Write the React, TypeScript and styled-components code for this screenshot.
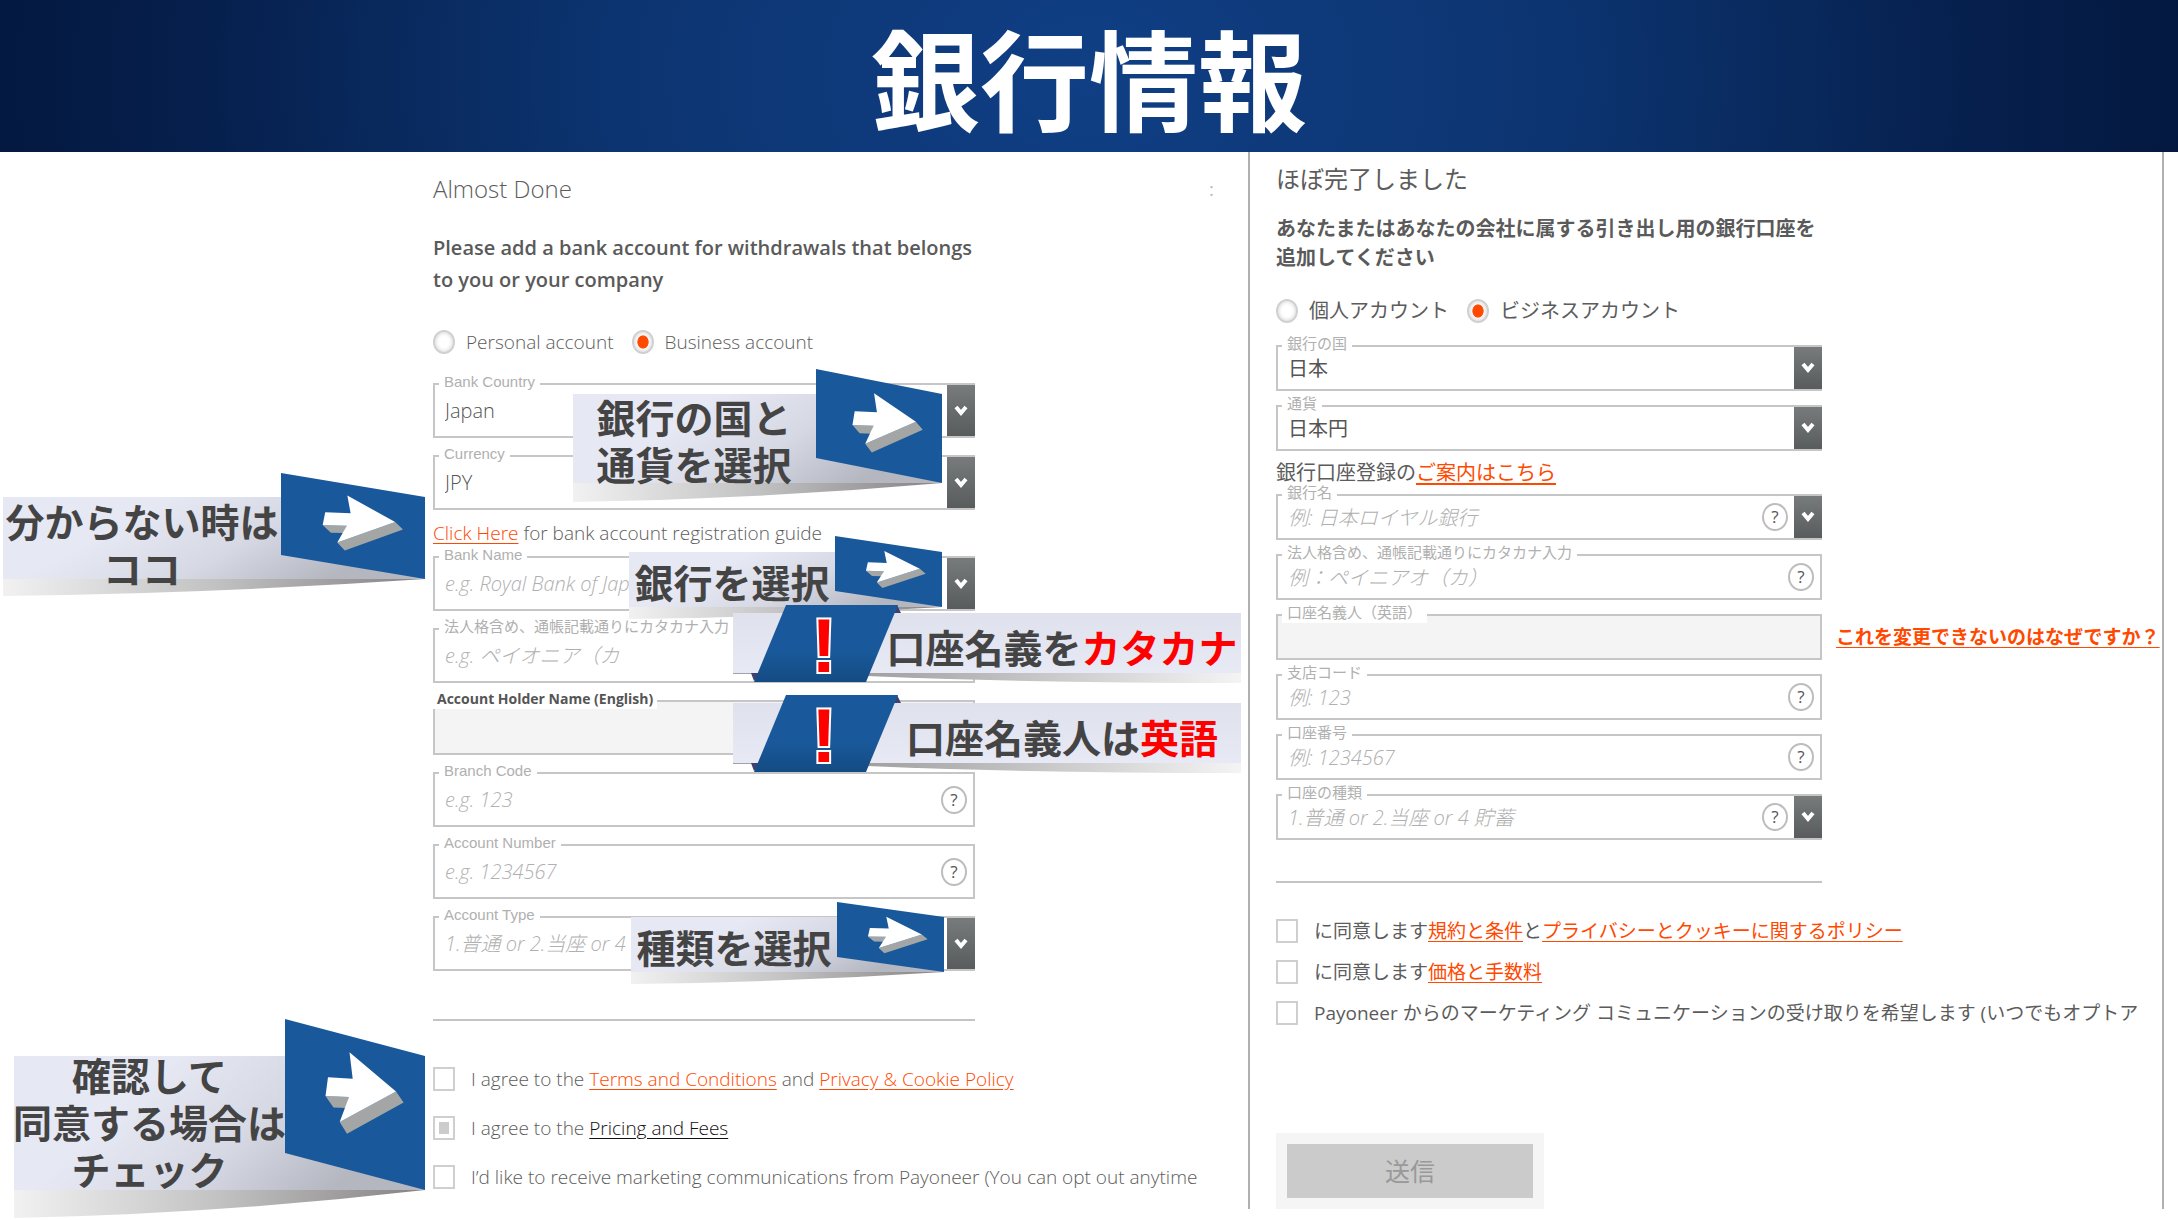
import React, { useId } from "react";
import styled, { createGlobalStyle, css } from "styled-components";

const sans = '"Open Sans", "Noto Sans CJK JP", sans-serif';
const orange = "#ff4800";

const GlobalStyle = createGlobalStyle`
  *, *::before, *::after { box-sizing: border-box; }
  body { margin: 0; background: #fff; font-family: ${sans}; color: #5c5c5c; }
  h1, h2, p { margin: 0; }
`;

const Banner = styled.header`
  display: flex;
  justify-content: center;
  align-items: center;
  height: 152px;
  background: radial-gradient(ellipse 1200px 900px at 50% 50%, #103f85 0%, #0c3470 40%, #061f4c 75%, #02153a 100%);
`;

const BannerTitle = styled.h1`
  font: 700 109px/144px "Noto Sans CJK JP", sans-serif;
  color: #fff;
`;

const Columns = styled.main`
  display: grid;
  grid-template-columns: minmax(0, 1248fr) minmax(0, 930fr);
  padding-bottom: 12px;
`;

const EnglishPanel = styled.section`
  padding: 17px 34px 0 433px;
`;

const JapanesePanel = styled.section`
  margin-right: 14px;
  padding: 11px 0 0 26px;
  border: solid #b0b0b0;
  border-width: 0 2px;
  overflow: hidden;
`;

const TitleRow = styled.div`
  display: flex;
  justify-content: space-between;
  align-items: center;
`;

const Title = styled.h2<{ $compact?: boolean }>`
  font-size: 24px;
  line-height: ${(p) => (p.$compact ? 32 : 40)}px;
  font-weight: ${(p) => (p.$compact ? 400 : 300)};
`;

const Mark = styled.span`
  font-size: 19px;
  color: #bbb;
`;

const Lead = styled.p<{ $compact?: boolean }>`
  max-width: 546px;
  margin-top: ${(p) => (p.$compact ? 19 : 23)}px;
  font-size: 20px;
  line-height: ${(p) => (p.$compact ? 29 : 32)}px;
  font-weight: ${(p) => (p.$compact ? 700 : 600)};
  color: #5a5a5a;
  white-space: nowrap;
`;

const RadioRow = styled.div<{ $compact?: boolean }>`
  display: flex;
  gap: 18px;
  height: 26px;
  margin: ${(p) => (p.$compact ? "26px 0 21px" : "33px 0 28px")};
`;

const Choice = styled.label<{ $compact?: boolean }>`
  display: flex;
  align-items: center;
  gap: 11px;
  font-size: ${(p) => (p.$compact ? 20 : 19)}px;
  font-weight: ${(p) => (p.$compact ? 400 : 300)};
  line-height: 26px;
  white-space: nowrap;
`;

const Radio = styled.input`
  appearance: none;
  flex: none;
  width: 22px;
  height: 24px;
  margin: 0;
  border: 2px solid #d0d0d0;
  border-radius: 50%;
  box-shadow: inset 0 0 4px #ccc;
  &:checked {
    background: radial-gradient(ellipse 6px 7px, ${orange} 88%, transparent 100%);
  }
`;

const Fields = styled.div<{ $compact?: boolean }>`
  display: flex;
  flex-direction: column;
  gap: ${(p) => (p.$compact ? 14 : 17)}px;
  max-width: ${(p) => (p.$compact ? 546 : 542)}px;
`;

const FieldBox = styled.div<{ $compact?: boolean; $muted?: boolean }>`
  position: relative;
  display: flex;
  align-items: stretch;
  height: ${(p) => (p.$compact ? 46 : 55)}px;
  border: 2px solid #c6c6c6;
  background: ${(p) => (p.$muted ? "#f4f4f4" : "#fff")};
`;

const FieldLabel = styled.label<{ $strong?: boolean }>`
  position: absolute;
  top: -13px;
  left: ${(p) => (p.$strong ? -2 : 4)}px;
  padding: 0 ${(p) => (p.$strong ? 4 : 5)}px;
  background: #fff;
  font: 400 15px/20px "Liberation Sans", "Noto Sans CJK JP", sans-serif;
  color: #b0b0b0;
  white-space: nowrap;
  ${(p) => p.$strong && css`
    font: 700 14px/20px "Open Sans", sans-serif;
    color: #555;
  `}
`;

const control = css`
  flex: 1;
  min-width: 0;
  padding: 0 10px;
  border: 0;
  outline: 0;
  background: transparent;
  font-family: ${sans};
  font-size: 20px;
  color: #555;
`;

const TextInput = styled.input`
  ${control}
  font-weight: 300;
  &::placeholder { color: #b0b0b0; font-style: italic; opacity: 1; }
`;

const Select = styled.select<{ $compact?: boolean; $hint?: boolean }>`
  ${control}
  appearance: none;
  font-weight: ${(p) => (p.$compact && !p.$hint ? 400 : 300)};
  ${(p) => p.$hint && css`color: #b0b0b0; font-style: italic;`}
`;

const Help = styled.button`
  align-self: center;
  flex: none;
  width: 26px;
  height: 28px;
  margin-right: 6px;
  padding: 0;
  border: 2px solid #bdbdbd;
  border-radius: 50%;
  background: #fff;
  font: 400 17px/20px "Open Sans", sans-serif;
  color: #555;
`;

const ArrowTab = styled.span`
  flex: none;
  display: flex;
  align-items: center;
  justify-content: center;
  width: 28px;
  margin-right: -2px;
  background: linear-gradient(#787b7c, #595c5d);
  pointer-events: none;
`;

const SideLink = styled.a`
  position: absolute;
  left: 558px;
  top: 6px;
  font-size: 19px;
  line-height: 30px;
  font-weight: 700;
  color: ${orange};
  text-underline-offset: 3px;
  white-space: nowrap;
`;

const Guide = styled.p<{ $compact?: boolean }>`
  margin: ${(p) => (p.$compact ? "10px 0 9px" : "11px 0")};
  font-size: ${(p) => (p.$compact ? 20 : 19)}px;
  line-height: 24px;
  font-weight: ${(p) => (p.$compact ? 400 : 300)};
  white-space: nowrap;
`;

const Link = styled.a<{ $dark?: boolean }>`
  color: ${(p) => (p.$dark ? "#111" : orange)};
  text-underline-offset: 3px;
`;

const Rule = styled.hr<{ $compact?: boolean }>`
  max-width: ${(p) => (p.$compact ? 546 : 542)}px;
  height: 2px;
  margin: ${(p) => (p.$compact ? "41px 0 35px" : "48px 0 45px")};
  border: 0;
  background: #c4c4c4;
`;

const Anchor = styled.div`
  position: relative;
`;

const Agreements = styled.div<{ $compact?: boolean }>`
  position: relative;
  display: flex;
  flex-direction: column;
  gap: ${(p) => (p.$compact ? 15 : 23)}px;
`;

const Agreement = styled.div<{ $compact?: boolean }>`
  display: flex;
  align-items: center;
  gap: 16px;
  font-size: 19px;
  line-height: 26px;
  font-weight: ${(p) => (p.$compact ? 400 : 300)};
  white-space: nowrap;
`;

const Checkbox = styled.input`
  appearance: none;
  flex: none;
  width: 22px;
  height: 24px;
  margin: 0;
  border: 2px solid #cfcfcf;
  &:checked {
    padding: 4px;
    background: #ccc content-box;
  }
`;

const SubmitWell = styled.div`
  width: 268px;
  margin-top: 107px;
  padding: 11px;
  background: #f5f5f5;
`;

const Submit = styled.button`
  width: 100%;
  height: 54px;
  border: 0;
  background: #cbcbcb;
  font: 400 25px/32px ${sans};
  color: #999;
`;

const CalloutBox = styled.aside<{ $x: number; $y: number; $w: number; $h: number }>`
  position: absolute;
  z-index: 2;
  left: ${(p) => p.$x}px;
  top: ${(p) => p.$y}px;
  width: ${(p) => p.$w}px;
  height: ${(p) => p.$h}px;
`;

const CalloutArt = styled.svg`
  position: absolute;
  inset: 0;
  overflow: visible;
`;

const CalloutText = styled.p<{ $top: number; $left?: number; $width: number }>`
  position: absolute;
  top: ${(p) => p.$top}px;
  left: ${(p) => p.$left ?? 0}px;
  display: flex;
  justify-content: center;
  width: ${(p) => p.$width}px;
  font: 700 39px/47px "Noto Sans CJK JP", sans-serif;
  color: #444;
  text-align: center;
  white-space: pre;
`;

const Red = styled.span`
  color: #f00;
`;

type ArrowCalloutProps = {
  x: number;
  y: number;
  width: number;
  flagWidth: number;
  slant: number;
  panel: number;
  shadow: number;
  textTop: number;
  textWidth?: number;
  arrowScale?: number;
  children: React.ReactNode;
};

function ArrowCallout({
  x, y, width, flagWidth, slant, panel, shadow, textTop, textWidth, arrowScale = 1.09, children,
}: ArrowCalloutProps) {
  const id = useId();
  const left = width - flagWidth;
  const bottom = slant + panel;
  const height = bottom + shadow;
  const sx = flagWidth / 140;
  const sy = (bottom / 172) * arrowScale;
  return (
    <CalloutBox $x={x} $y={y} $w={width} $h={height}>
      <CalloutArt width={width} height={height} aria-hidden="true">
        <defs>
          <linearGradient id={`${id}p`} x1="0" y1="0" x2="1" y2="0.35">
            <stop offset="0.35" stopColor="#e6e8f4" />
            <stop offset="0.68" stopColor="#d6d8e4" />
            <stop offset="1" stopColor="#b4b6c0" />
          </linearGradient>
          <linearGradient id={`${id}s`}>
            <stop offset="0" stopColor="#f1f1f1" />
            <stop offset="0.5" stopColor="#c2c2c2" />
            <stop offset="1" stopColor="#868284" />
          </linearGradient>
        </defs>
        <rect y={slant} width={width} height={panel} fill={`url(#${id}p)`} />
        <path
          d={`M0 ${bottom}H${width}Q${width * 0.5} ${bottom + shadow * 0.85} 0 ${height}Z`}
          fill={`url(#${id}s)`}
        />
        <path d={`M${left} 0L${width} ${slant}V${bottom}L${left} ${panel}Z`} fill="#19599b" />
        <g transform={`translate(${left} 0) scale(${sx} ${sy})`}>
          <path d="M54.7 103.5L62 115.5L118.6 84L111 73ZM40.5 77.5L48.5 89L61 89.5L64 78.5Z" fill="#a3a6a5" />
          <path d="M64.5 33.5L111 73L54.7 103.5L64 78.5L40.5 77.5L43 58.5L67.7 60Z" fill="#fff" />
        </g>
      </CalloutArt>
      <CalloutText $top={textTop} $width={textWidth ?? left}>{children}</CalloutText>
    </CalloutBox>
  );
}

function AlertCallout({ y, children }: { y: number; children: React.ReactNode }) {
  const id = useId();
  return (
    <CalloutBox $x={298} $y={y} $w={508} $h={78}>
      <CalloutArt width={508} height={78} aria-hidden="true">
        <defs>
          <linearGradient id={`${id}p`} x1="0" y1="0" x2="0" y2="1">
            <stop offset="0" stopColor="#dfe1ed" />
            <stop offset="1" stopColor="#e7e9f5" />
          </linearGradient>
          <linearGradient id={`${id}s`}>
            <stop offset="0" stopColor="#a0a0a0" />
            <stop offset="1" stopColor="#f4f4f4" />
          </linearGradient>
          <linearGradient id={`${id}b`} x1="0" y1="0" x2="0" y2="1">
            <stop offset="0" stopColor="#19599b" />
            <stop offset="0.6" stopColor="#19599b" />
            <stop offset="1" stopColor="#144b83" />
          </linearGradient>
        </defs>
        <rect y="8" width="508" height="60" fill={`url(#${id}p)`} />
        <path d="M134 68H508V78Q300 78 134 71Z" fill={`url(#${id}s)`} />
        <path d="M0 68H24V69H0Z" fill="#9fa1ae" />
        <path d="M18 68L21 76L28 68ZM164 0L168 8H158Z" fill="#3f4170" />
        <path d="M53 0H165L133 77H21Z" fill={`url(#${id}b)`} />
        <text
          x="91"
          y="67"
          textAnchor="middle"
          fontFamily='"Liberation Sans", sans-serif'
          fontWeight="700"
          fontSize="76"
          fill="#f00"
          stroke="#fff"
          strokeWidth="4"
          paintOrder="stroke"
        >
          !
        </text>
      </CalloutArt>
      <CalloutText $top={18} $left={149} $width={360}>{children}</CalloutText>
    </CalloutBox>
  );
}

type FieldProps = {
  label: string;
  value?: string;
  hint?: string;
  select?: boolean;
  help?: boolean;
  muted?: boolean;
  strong?: boolean;
  compact?: boolean;
  children?: React.ReactNode;
};

function Field({ label, value, hint, select, help, muted, strong, compact, children }: FieldProps) {
  const id = useId();
  return (
    <FieldBox $compact={compact} $muted={muted}>
      <FieldLabel htmlFor={id} $strong={strong}>{label}</FieldLabel>
      {select ? (
        <Select id={id} $compact={compact} $hint={!value}>
          <option>{value ?? hint}</option>
        </Select>
      ) : (
        <TextInput id={id} placeholder={hint} readOnly={muted} />
      )}
      {help && <Help type="button">?</Help>}
      {select && (
        <ArrowTab>
          <svg width="14" height="14" viewBox="0 0 14 14" fill="none" stroke="#fff" strokeWidth="4">
            <path d="M2 3L7 9L12 3" />
          </svg>
        </ArrowTab>
      )}
      {children}
    </FieldBox>
  );
}

function Check({ checked, compact, children }: { checked?: boolean; compact?: boolean; children: React.ReactNode }) {
  const id = useId();
  return (
    <Agreement $compact={compact}>
      <Checkbox id={id} type="checkbox" defaultChecked={checked} />
      <label htmlFor={id}>{children}</label>
    </Agreement>
  );
}

export default function App() {
  return (
    <>
      <GlobalStyle />
      <Banner>
        <BannerTitle>銀行情報</BannerTitle>
      </Banner>
      <Columns>
        <EnglishPanel lang="en">
          <TitleRow>
            <Title>Almost Done</Title>
            <Mark>:</Mark>
          </TitleRow>
          <Lead>
            Please add a bank account for withdrawals that belongs
            <br />
            to you or your company
          </Lead>
          <RadioRow>
            <Choice><Radio type="radio" name="account" />Personal account</Choice>
            <Choice><Radio type="radio" name="account" defaultChecked />Business account</Choice>
          </RadioRow>
          <Fields>
            <Field label="Bank Country" value="Japan" select>
              <ArrowCallout x={138} y={-16} width={369} flagWidth={126} slant={25} panel={89} shadow={19} textTop={24} textWidth={242}>
                {"銀行の国と\n通貨を選択"}
              </ArrowCallout>
            </Field>
            <Field label="Currency" value="JPY" select />
          </Fields>
          <Guide>
            <Link href="#guide">Click Here</Link> for bank account registration guide
          </Guide>
          <Anchor>
            <ArrowCallout x={-430} y={-83} width={422} flagWidth={144} slant={24} panel={82} shadow={17} textTop={24}>
              {"分からない時は\nココ"}
            </ArrowCallout>
            <Fields>
              <Field label="Bank Name" hint="e.g. Royal Bank of Japan" select>
                <ArrowCallout x={194} y={-22} width={313} flagWidth={107} slant={16} panel={55} shadow={12} textTop={22}>
                  銀行を選択
                </ArrowCallout>
              </Field>
              <Field label="法人格含め、通帳記載通りにカタカナ入力" hint="e.g. ペイオニア（カ">
                <AlertCallout y={-25}><span>口座名義を<Red>カタカナ</Red></span></AlertCallout>
              </Field>
              <Field label="Account Holder Name (English)" muted strong>
                <AlertCallout y={-7}><span>口座名義人は<Red>英語</Red></span></AlertCallout>
              </Field>
              <Field label="Branch Code" hint="e.g. 123" help />
              <Field label="Account Number" hint="e.g. 1234567" help />
              <Field label="Account Type" hint="1.普通 or 2.当座 or 4 貯蓄" select>
                <ArrowCallout x={196} y={-16} width={313} flagWidth={107} slant={15} panel={55} shadow={12} textTop={21}>
                  種類を選択
                </ArrowCallout>
              </Field>
            </Fields>
          </Anchor>
          <Rule />
          <Agreements>
            <Check>
              I agree to the <Link href="#terms">Terms and Conditions</Link> and{" "}
              <Link href="#privacy">Privacy &amp; Cookie Policy</Link>
            </Check>
            <Check checked>
              I agree to the <Link href="#pricing" $dark>Pricing and Fees</Link>
            </Check>
            <Check>I’d like to receive marketing communications from Payoneer (You can opt out anytime</Check>
            <ArrowCallout x={-419} y={-47} width={411} flagWidth={140} slant={37} panel={134} shadow={28} textTop={32} arrowScale={1}>
              {"確認して\n同意する場合は\nチェック"}
            </ArrowCallout>
          </Agreements>
        </EnglishPanel>
        <JapanesePanel lang="ja">
          <Title $compact>ほぼ完了しました</Title>
          <Lead $compact>
            あなたまたはあなたの会社に属する引き出し用の銀行口座を
            <br />
            追加してください
          </Lead>
          <RadioRow $compact>
            <Choice $compact><Radio type="radio" name="account-ja" />個人アカウント</Choice>
            <Choice $compact><Radio type="radio" name="account-ja" defaultChecked />ビジネスアカウント</Choice>
          </RadioRow>
          <Fields $compact>
            <Field compact label="銀行の国" value="日本" select />
            <Field compact label="通貨" value="日本円" select />
          </Fields>
          <Guide $compact>
            銀行口座登録の<Link href="#guide-ja">ご案内はこちら</Link>
          </Guide>
          <Fields $compact>
            <Field compact label="銀行名" hint="例: 日本ロイヤル銀行" select help />
            <Field compact label="法人格含め、通帳記載通りにカタカナ入力" hint="例：ペイニアオ（カ）" help />
            <Field compact label="口座名義人（英語）" muted>
              <SideLink href="#why">これを変更できないのはなぜですか？</SideLink>
            </Field>
            <Field compact label="支店コード" hint="例: 123" help />
            <Field compact label="口座番号" hint="例: 1234567" help />
            <Field compact label="口座の種類" hint="1.普通 or 2.当座 or 4 貯蓄" select help />
          </Fields>
          <Rule $compact />
          <Agreements $compact>
            <Check compact>
              に同意します<Link href="#terms-ja">規約と条件</Link>と
              <Link href="#privacy-ja">プライバシーとクッキーに関するポリシー</Link>
            </Check>
            <Check compact>
              に同意します<Link href="#pricing-ja">価格と手数料</Link>
            </Check>
            <Check compact>
              Payoneer からのマーケティング コミュニケーションの受け取りを希望します (いつでもオプトア
            </Check>
          </Agreements>
          <SubmitWell>
            <Submit type="button">送信</Submit>
          </SubmitWell>
        </JapanesePanel>
      </Columns>
    </>
  );
}
